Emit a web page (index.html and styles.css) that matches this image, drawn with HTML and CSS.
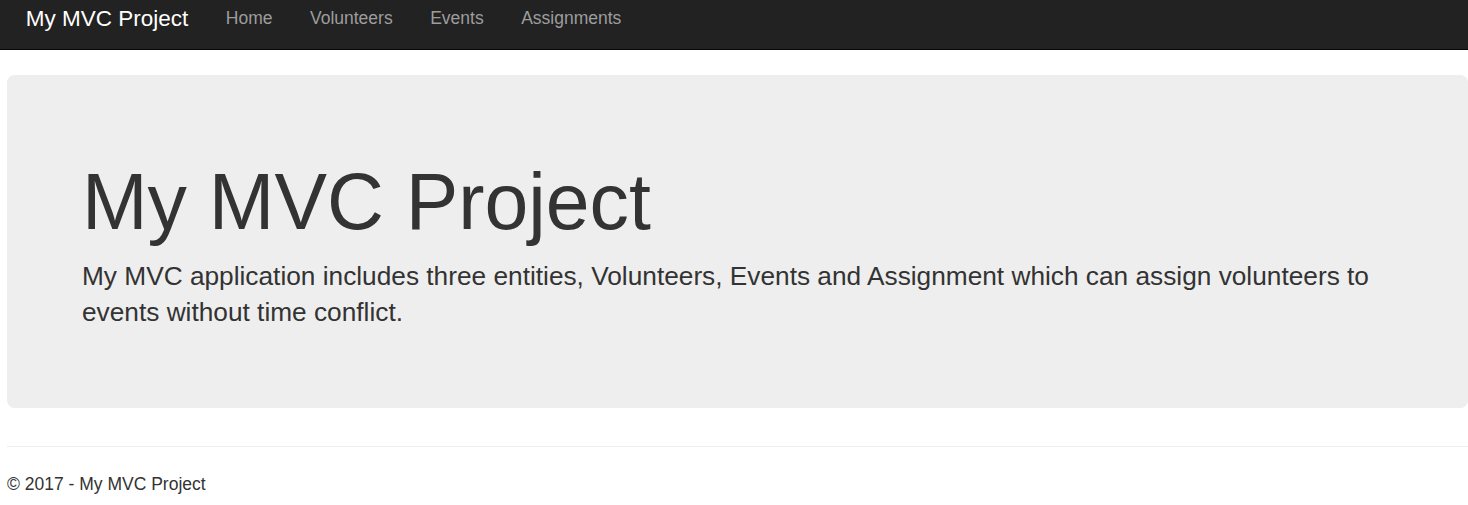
FILE: index.html
```html
<!DOCTYPE html>
<html lang="en">
<head>
<meta charset="utf-8">
<title>My MVC Project</title>
<link rel="stylesheet" href="styles.css">
</head>
<body>
<header class="navbar">
  <div class="navbar-inner">
    <a class="brand" href="#">My MVC Project</a>
    <ul class="nav">
      <li><a href="#">Home</a></li>
      <li><a href="#">Volunteers</a></li>
      <li><a href="#">Events</a></li>
      <li><a href="#">Assignments</a></li>
    </ul>
  </div>
</header>
<main class="body-content">
  <section class="jumbotron">
    <h1>My MVC Project</h1>
    <p>My MVC application includes three entities, Volunteers, Events and Assignment which can assign volunteers to events without time conflict.</p>
  </section>
  <hr class="divider">
  <footer class="footer">
    <p>&copy; 2017 - My MVC Project</p>
  </footer>
</main>
</body>
</html>
```

FILE: styles.css
```css
* { box-sizing: border-box; }
html, body { margin: 0; padding: 0; }
body {
  font-family: "Liberation Sans", Arial, Helvetica, sans-serif;
  font-size: 17.5px;
  line-height: 25px;
  color: #333;
  background: #fff;
}
a { text-decoration: none; }

.navbar {
  height: 50px;
  background: #222;
  border-bottom: 1px solid #080808;
}
.navbar-inner {
  display: flex;
  align-items: flex-start;
  padding: 5.5px 0 0 7px;
}
.brand {
  display: block;
  padding: 0 18.75px;
  font-size: 22.5px;
  line-height: 25px;
  color: #fff;
}
.nav {
  display: flex;
  list-style: none;
  margin: 0;
  padding: 0;
}
.nav a {
  display: block;
  padding: 0 18.75px;
  font-size: 17.5px;
  line-height: 25px;
  color: #9d9d9d;
}

.body-content {
  padding: 0 0 0 7px;
}
.jumbotron {
  margin: 25px 0 38px 0;
  padding: 60px 75px 60px 75px;
  background: #eee;
  border-radius: 7.5px;
}
.jumbotron h1 {
  margin: 24px 0 12.5px 0;
  font-size: 78.75px;
  line-height: 86.6px;
  font-weight: 500;
  color: #333;
}
.jumbotron p {
  margin: 0 0 18px 0;
  font-size: 26.25px;
  line-height: 36px;
  font-weight: 400;
}
.divider {
  margin: 0 0 25px 0;
  border: 0;
  border-top: 1px solid #eee;
  height: 0;
}
.footer p {
  margin: 0;
  font-size: 17.5px;
  line-height: 25px;
}
```
